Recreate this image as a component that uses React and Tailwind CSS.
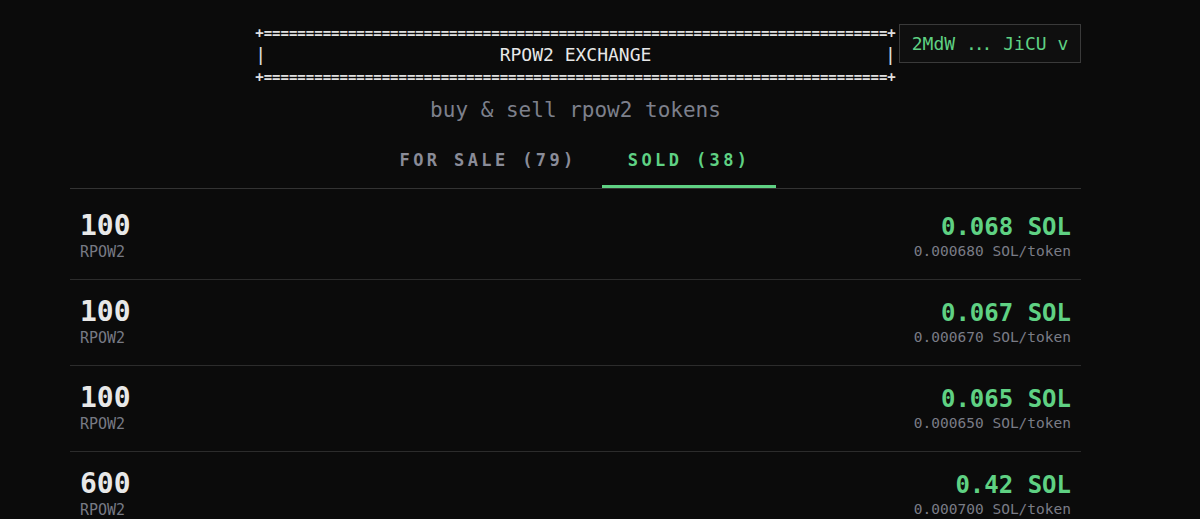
import React from "react";

const ROWS = [
  { amount: "100", price: "0.068 SOL", per: "0.000680 SOL/token" },
  { amount: "100", price: "0.067 SOL", per: "0.000670 SOL/token" },
  { amount: "100", price: "0.065 SOL", per: "0.000650 SOL/token" },
  { amount: "600", price: "0.42 SOL", per: "0.000700 SOL/token" },
];

const MONO = "font-['DejaVu_Sans_Mono','Liberation_Mono',monospace]";
const RULE = "+" + "=".repeat(74) + "+";

export default function App() {
  return (
    <div className={`min-h-screen bg-[#0b0b0b] text-[#e6e6e6] ${MONO}`}>
      <div className="pl-[70px] pr-[119px]">
        {/* header */}
        <header className="relative pt-[22px]">
          <div className="mx-auto w-fit text-[14px] leading-[22px] text-[#e0e0e0]">
            <div className="whitespace-pre font-bold">{RULE}</div>
            <div className="flex items-center">
              <span className="text-[18px]">|</span>
              <h1 className="flex-1 text-center text-[18px] leading-[22px] text-[#e8e8e8]">
                RPOW2 EXCHANGE
              </h1>
              <span className="text-[18px]">|</span>
            </div>
            <div className="whitespace-pre font-bold">{RULE}</div>
          </div>

          <button className="absolute right-0 top-[24px] h-[39px] w-[182px] whitespace-pre border border-[#3a3a3a] bg-[#0f0f0f] text-center text-[18px] leading-[37px] text-[#5fd183]">
            2MdW <span className="mr-[3px] tracking-[-3px]">...</span> JiCU v
          </button>

          <p className="mt-2 text-center text-[21px] leading-[28px] text-[#7d808c]">
            buy &amp; sell rpow2 tokens
          </p>
        </header>

        {/* tabs */}
        <nav className="mt-3 flex justify-center border-b border-[#333]">
          <button className="border-b-[3px] border-transparent px-[25px] pt-3 pb-[13px] text-[17px] font-bold leading-6 tracking-[0.2em] text-[#8a8c98]">
            FOR SALE (79)
          </button>
          <button className="border-b-[3px] border-[#5fd183] px-[26px] pt-3 pb-[13px] text-[17px] font-bold leading-6 tracking-[0.2em] text-[#5fd183]">
            SOLD (38)
          </button>
        </nav>

        {/* listings */}
        <ul className="mt-[5px] divide-y divide-[#2c2c2c]">
          {ROWS.map((r, i) => (
            <li key={i} className="flex items-center justify-between px-[10px] pt-4 pb-[17px]">
              <div>
                <div className="text-[28px] font-bold leading-[32px] text-[#e8e8e8]">{r.amount}</div>
                <div className="text-[15px] leading-5 text-[#777a84]">RPOW2</div>
              </div>
              <div className="text-right">
                <div className="text-[24px] font-bold leading-[30px] text-[#5fd183]">{r.price}</div>
                <div className="text-[14.5px] leading-[18px] text-[#7a7c86]">{r.per}</div>
              </div>
            </li>
          ))}
        </ul>
      </div>
    </div>
  );
}
